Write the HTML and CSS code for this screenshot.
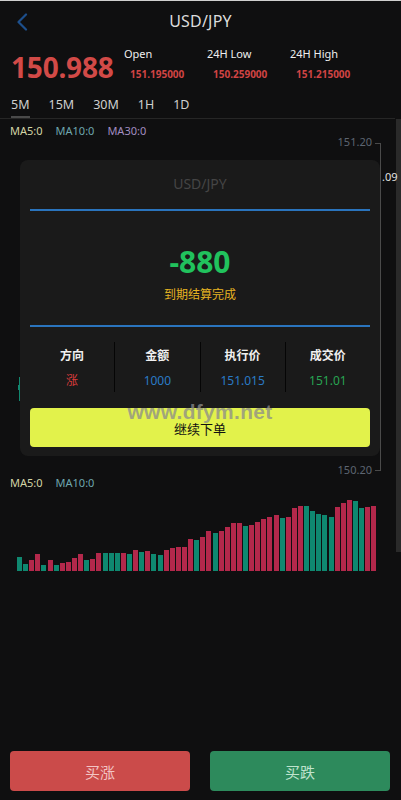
FILE: index.html
```html
<!DOCTYPE html>
<html lang="zh">
<head>
<meta charset="utf-8">
<title>USD/JPY</title>
<link rel="stylesheet" href="styles.css">
</head>
<body>
<div class="page">
  <header class="topbar">
    <svg class="back" width="12" height="18" viewBox="0 0 12 18"><path d="M10 1.5 L2.5 9 L10 16.5" fill="none" stroke="#1d4f8c" stroke-width="2.2" stroke-linecap="round" stroke-linejoin="round"/></svg>
    <div class="title">USD/JPY</div>
  </header>

  <section class="quote">
    <div class="price">150.988</div>
    <div class="stats">
      <div class="stat"><div class="stat-label">Open</div><div class="stat-value">151.195000</div></div>
      <div class="stat"><div class="stat-label">24H Low</div><div class="stat-value">150.259000</div></div>
      <div class="stat"><div class="stat-label">24H High</div><div class="stat-value">151.215000</div></div>
    </div>
  </section>

  <nav class="tabs">
    <span class="tab active">5M</span>
    <span class="tab">15M</span>
    <span class="tab">30M</span>
    <span class="tab">1H</span>
    <span class="tab">1D</span>
  </nav>

  <section class="chart">
    <div class="ma-row">
      <span class="ma5">MA5:0</span>
      <span class="ma10">MA10:0</span>
      <span class="ma30">MA30:0</span>
    </div>
    <div class="scroll-strip"></div>
    <div class="axis-line"></div>
    <div class="tick tick-top"></div>
    <div class="tick tick-bottom"></div>
    <div class="axis-label label-top">151.20</div>
    <div class="axis-label label-bottom">150.20</div>
    <div class="cut-label">.09</div>
    <div class="candle"><div class="wick"></div><div class="body-c"></div></div>

    <div class="vol-ma">
      <span class="ma5">MA5:0</span>
      <span class="ma10">MA10:0</span>
    </div>
    <div class="volume">
      <i class="g" style="height:14px"></i><i class="g" style="height:7px"></i><i class="r" style="height:11px"></i><i class="r" style="height:17px"></i><i class="g" style="height:6px"></i><i class="r" style="height:11px"></i><i class="g" style="height:6px"></i><i class="r" style="height:8px"></i><i class="r" style="height:9px"></i><i class="r" style="height:13px"></i>
      <i class="r" style="height:17px"></i><i class="g" style="height:11px"></i><i class="r" style="height:12px"></i><i class="r" style="height:18px"></i><i class="g" style="height:18px"></i><i class="g" style="height:18px"></i><i class="g" style="height:18px"></i><i class="r" style="height:18px"></i><i class="g" style="height:17px"></i><i class="r" style="height:21px"></i>
      <i class="g" style="height:19px"></i><i class="r" style="height:20px"></i><i class="g" style="height:17px"></i><i class="g" style="height:16px"></i><i class="r" style="height:21px"></i><i class="r" style="height:23px"></i><i class="r" style="height:24px"></i><i class="r" style="height:24px"></i><i class="r" style="height:32px"></i><i class="g" style="height:31px"></i>
      <i class="r" style="height:34px"></i><i class="r" style="height:40px"></i><i class="g" style="height:38px"></i><i class="r" style="height:40px"></i><i class="r" style="height:44px"></i><i class="r" style="height:48px"></i><i class="r" style="height:48px"></i><i class="g" style="height:45px"></i><i class="r" style="height:46px"></i><i class="r" style="height:49px"></i>
      <i class="r" style="height:52px"></i><i class="r" style="height:54px"></i><i class="r" style="height:56px"></i><i class="g" style="height:53px"></i><i class="r" style="height:54px"></i><i class="r" style="height:63px"></i><i class="r" style="height:65px"></i><i class="g" style="height:65px"></i><i class="g" style="height:60px"></i><i class="g" style="height:57px"></i>
      <i class="g" style="height:56px"></i><i class="g" style="height:54px"></i><i class="r" style="height:64px"></i><i class="r" style="height:68px"></i><i class="r" style="height:71px"></i><i class="g" style="height:70px"></i><i class="g" style="height:63px"></i><i class="r" style="height:64px"></i><i class="r" style="height:65px"></i>
    </div>

    <div class="modal">
      <div class="modal-title">USD/JPY</div>
      <div class="rule"></div>
      <div class="result">-880</div>
      <div class="result-note">到期结算完成</div>
      <div class="rule"></div>
      <div class="details">
        <div class="cell"><div class="cell-head">方向</div><div class="cell-val red">涨</div></div>
        <div class="cell"><div class="cell-head">金额</div><div class="cell-val blue">1000</div></div>
        <div class="cell"><div class="cell-head">执行价</div><div class="cell-val blue">151.015</div></div>
        <div class="cell"><div class="cell-head">成交价</div><div class="cell-val green">151.01</div></div>
      </div>
      <button class="continue">继续下单</button>
      <div class="watermark">www.dfym.net</div>
    </div>
  </section>

  <footer class="actions">
    <button class="btn buy-up">买涨</button>
    <button class="btn buy-down">买跌</button>
  </footer>
</div>
</body>
</html>
```

FILE: styles.css
```css
* { box-sizing: border-box; }
html, body { margin: 0; padding: 0; }
body {
  background: #0f0f10;
  font-family: "Noto Sans", "Noto Sans CJK SC", sans-serif;
  color: #ddd;
}
.page {
  width: 401px;
  height: 800px;
  display: flex;
  flex-direction: column;
  border-top: 1px solid #cfcfcf;
  overflow: hidden;
}
.topbar {
  position: relative;
  height: 39px;
  display: flex;
  align-items: center;
  justify-content: center;
}
.back { position: absolute; left: 16px; top: 12px; }
.title { font-size: 16px; color: #dcdcdc; letter-spacing: 0.2px; }

.quote {
  display: flex;
  align-items: flex-start;
  padding: 4px 0 0 11px;
  height: 50px;
}
.price {
  font-size: 28px;
  font-weight: 700;
  color: #d24a47;
  line-height: 36px;
  margin-top: 5px;
  width: 113px;
  letter-spacing: -0.2px;
}
.stats { display: flex; padding-top: 3px; }
.stat { width: 83px; }
.stat-label { font-size: 11px; color: #eee; line-height: 14px; }
.stat-value { font-size: 10px; font-weight: 700; color: #d04444; line-height: 14px; margin-top: 6px; padding-left: 6px; }

.tabs {
  display: flex;
  gap: 19px;
  padding: 0 0 0 11px;
  height: 29px;
  align-items: flex-start;
  border-bottom: 1px solid #262626;
  margin-right: 6px;
}
.tab {
  font-size: 12.5px;
  color: #cfcfcf;
  line-height: 18px;
  padding-top: 6px;
  height: 28px;
}
.tab.active { border-bottom: 2px solid #4a4a4a; }

.chart {
  position: relative;
  height: 460px;
}
.ma-row, .vol-ma {
  display: flex;
  gap: 13px;
  font-size: 11px;
  padding-left: 10px;
  line-height: 14px;
}
.ma-row { padding-top: 5px; }
.ma5 { color: #d4d4a6; }
.ma10 { color: #6ea7ae; }
.ma30 { color: #a28dc0; }
.vol-ma { position: absolute; left: 0; top: 357px; }

.scroll-strip { position: absolute; left: 396px; top: 0; width: 5px; height: 433px; background: #2a2a2a; }
.axis-line { position: absolute; left: 380px; top: 24px; width: 1px; height: 328px; background: #4a4a4a; }
.tick { position: absolute; left: 375px; width: 6px; height: 1px; background: #4a4a4a; }
.tick-top { top: 24px; }
.tick-bottom { top: 351px; }
.axis-label { position: absolute; right: 29px; font-size: 11px; color: #5d6571; line-height: 14px; }
.label-top { top: 16px; }
.label-bottom { top: 344px; }
.cut-label { position: absolute; left: 382px; top: 51px; font-size: 11px; color: #e0e0e0; line-height: 14px; }
.candle { position: absolute; left: 18px; top: 258px; width: 3px; height: 24px; }
.wick { position: absolute; left: 1px; top: 0; width: 1px; height: 24px; background: #12876f; }
.body-c { position: absolute; left: 0; top: 8px; width: 3px; height: 5px; background: #12876f; }

.volume {
  position: absolute;
  left: 17px;
  top: 380px;
  width: 360px;
  height: 72px;
  display: flex;
  align-items: flex-end;
  justify-content: space-between;
}
.volume i { display: block; width: 5px; }
.volume i.r { background: #b3284b; }
.volume i.g { background: #0f8870; }

.modal {
  position: absolute;
  left: 20px;
  top: 41px;
  width: 360px;
  height: 296px;
  background: #1a1a1a;
  border-radius: 8px;
  padding: 0 10px;
  display: flex;
  flex-direction: column;
}
.modal-title {
  text-align: center;
  font-size: 14px;
  color: #454545;
  line-height: 20px;
  margin-top: 14px;
  height: 35px;
}
.rule { height: 2px; background: #2a74bd; }
.result {
  text-align: center;
  font-size: 30px;
  font-weight: 700;
  color: #21c25d;
  line-height: 36px;
  margin-top: 33px;
}
.result-note {
  text-align: center;
  font-size: 12px;
  color: #e6b422;
  line-height: 16px;
  margin-top: 7px;
  height: 38px;
}
.details {
  display: flex;
  margin-top: 15px;
  height: 50px;
}
.cell {
  flex: 1;
  text-align: center;
  border-left: 1px solid #050505;
}
.cell:first-child { border-left: none; }
.cell-head { font-size: 12px; font-weight: 700; color: #f0f0f0; line-height: 16px; margin-top: 6px; }
.cell-val { font-size: 12px; line-height: 16px; margin-top: 9px; }
.red { color: #d93b3b; }
.blue { color: #2a7ac6; }
.green { color: #28a552; }
.continue {
  margin-top: 16px;
  height: 39px;
  border: none;
  border-radius: 4px;
  background: #e2f24b;
  color: #111;
  font-family: "Noto Sans", "Noto Sans CJK SC", sans-serif;
  font-size: 13px;
  padding-top: 2px;
}
.watermark {
  position: absolute;
  left: 0;
  right: 0;
  top: 240px;
  text-align: center;
  font-family: "Liberation Sans", sans-serif;
  font-weight: 700;
  font-size: 21px;
  line-height: 24px;
  color: rgba(140, 140, 140, 0.75);
  letter-spacing: 0.3px;
  pointer-events: none;
}

.actions {
  margin-top: auto;
  display: flex;
  gap: 20px;
  padding: 0 11px 9px 10px;
}
.btn {
  flex: 1;
  height: 40px;
  border: none;
  border-radius: 4px;
  font-family: "Noto Sans", "Noto Sans CJK SC", sans-serif;
  font-size: 15px;
}
.buy-up { background: #cb4b4a; color: #f2c4c4; }
.buy-down { background: #2d8a5c; color: #bfe3cd; }
```
